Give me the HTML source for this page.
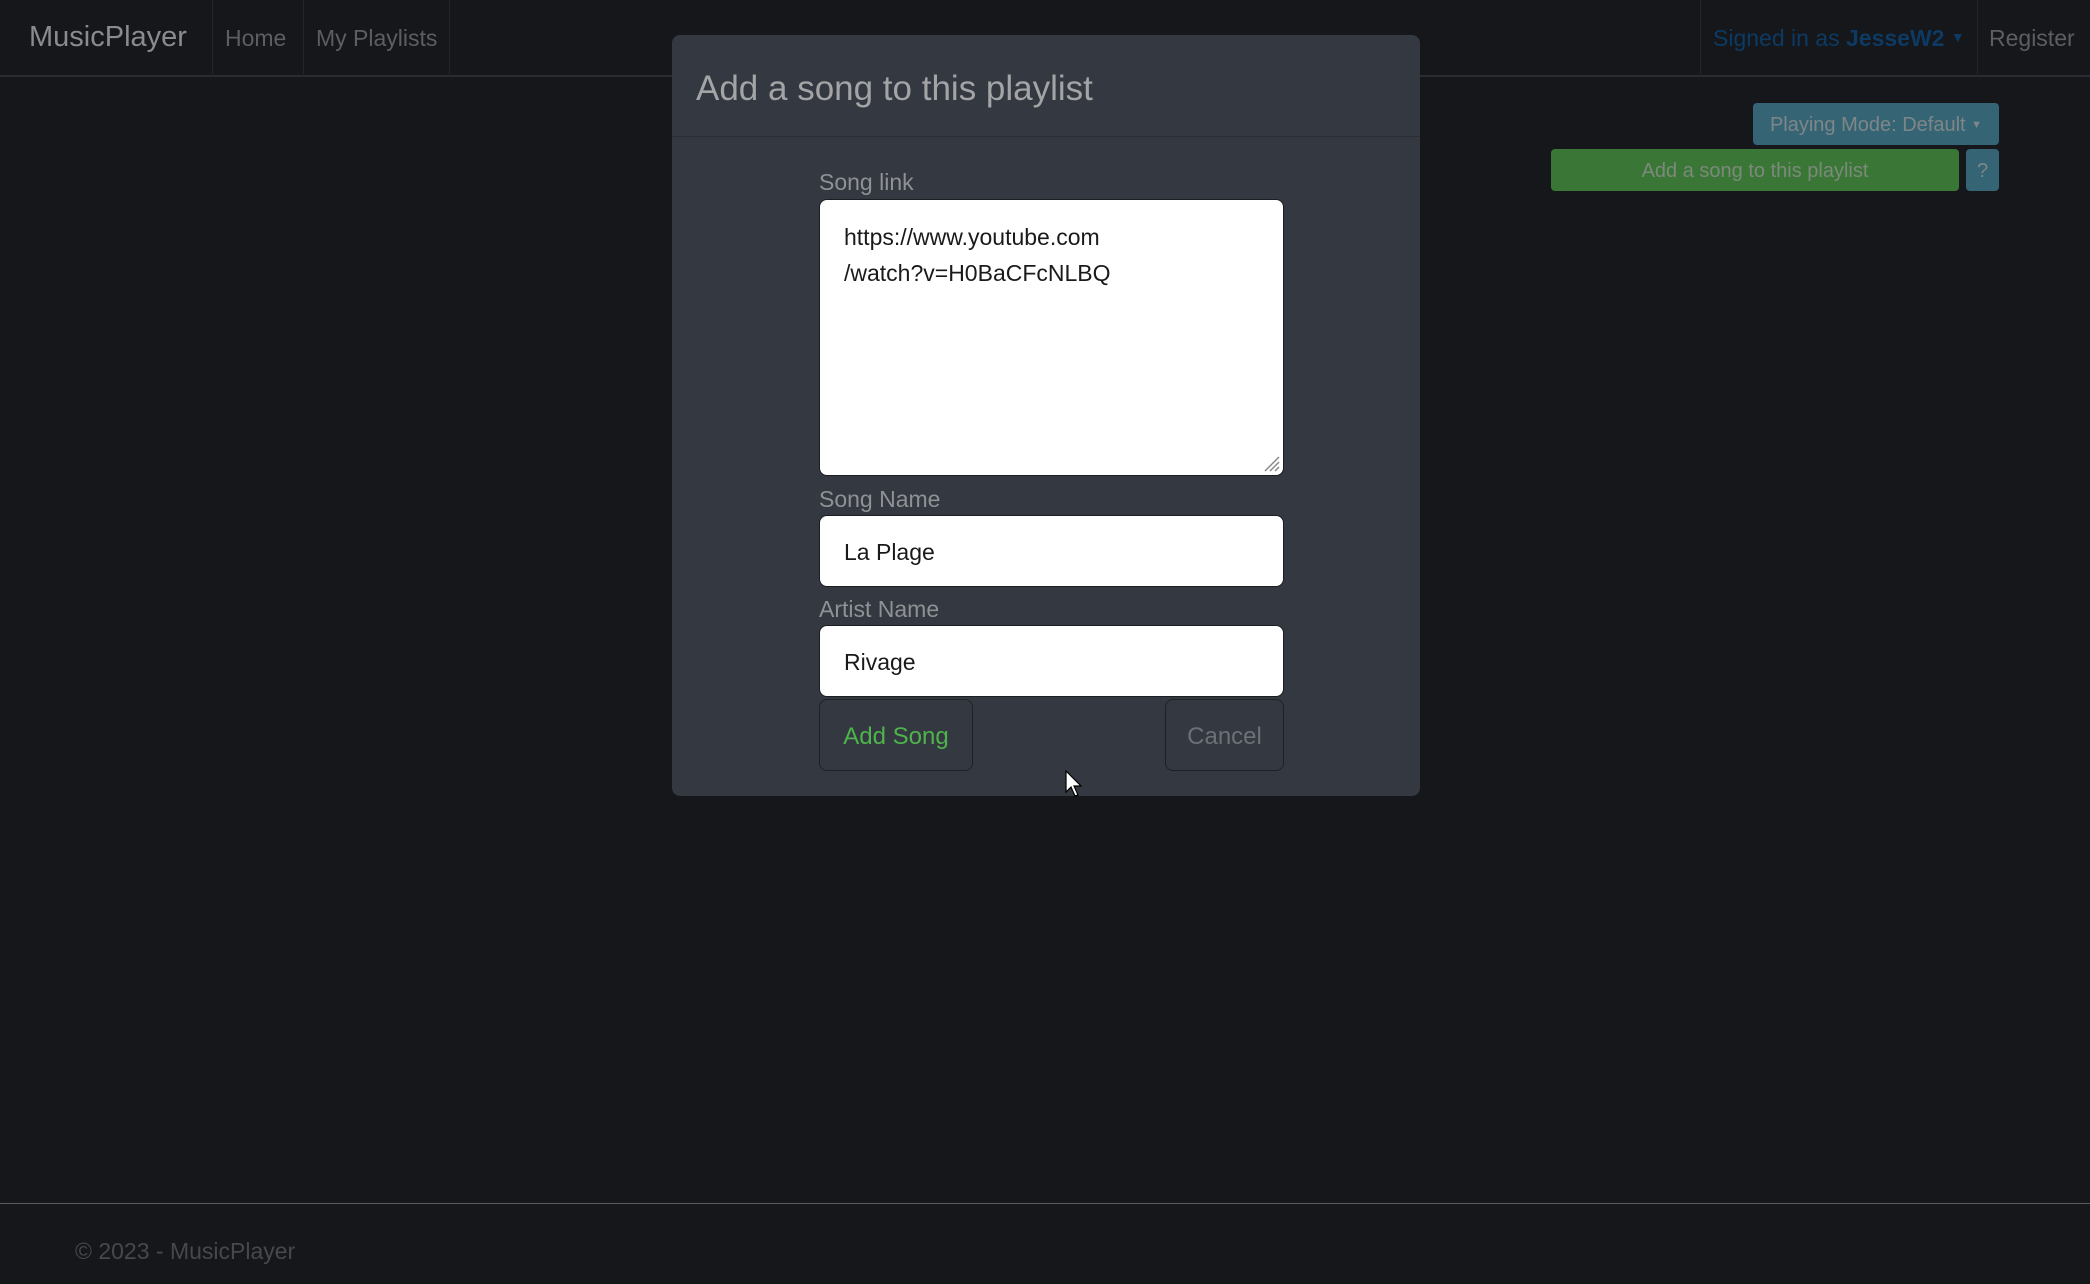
<!DOCTYPE html>
<html><head><meta charset="utf-8"><style>
*{box-sizing:border-box;margin:0;padding:0}
body{width:2090px;height:1284px;background:#15171b;font-family:"Liberation Sans",sans-serif;position:relative;overflow:hidden}
.a{position:absolute;white-space:nowrap}
.nav{position:absolute;left:0;top:0;width:2090px;height:77px;border-bottom:2px solid #2a2c31}
.sep{position:absolute;top:0;width:1px;height:77px;background:#22252a}
.modal{position:absolute;left:672px;top:35px;width:748px;height:761px;background:#343840;border-radius:8px}
.lbl{position:absolute;left:147px;color:#8f9295;font-size:23px}
.inp{position:absolute;left:147px;width:465px;background:#fff;border-radius:8px;border:1px solid #1b1d20;color:#1a1a1a;font-size:23px;padding-left:24px}
.btn{position:absolute;top:664px;height:72px;border:1px solid #1e2125;border-radius:8px;font-size:24px;text-align:center;line-height:74px}
</style></head><body>
<div class="nav">
<div class="a" style="left:29px;top:21px;font-size:29px;color:#8a8b8d">MusicPlayer</div>
<div class="sep" style="left:212px"></div>
<div class="a" style="left:225px;top:25px;font-size:23px;color:#5c5e61">Home</div>
<div class="sep" style="left:303px"></div>
<div class="a" style="left:316px;top:25px;font-size:23px;color:#5c5e61">My Playlists</div>
<div class="sep" style="left:449px"></div>
<div class="sep" style="left:1700px"></div>
<div class="a" style="left:1713px;top:25px;font-size:23px;color:#0d3a63">Signed in as <b>JesseW2</b> <span style="font-size:14px;position:relative;top:-4px">▼</span></div>
<div class="sep" style="left:1977px"></div>
<div class="a" style="left:1989px;top:25px;font-size:23px;color:#5c5e61">Register</div>
</div>
<div class="a" style="left:1753px;top:103px;width:246px;height:42px;background:#356574;border-radius:4px;color:#7e8688;font-size:20px;line-height:45px;text-align:center">Playing Mode: Default <span style="font-size:11px;position:relative;top:-3px">▼</span></div>
<div class="a" style="left:1551px;top:149px;width:408px;height:42px;background:#3a7636;border-radius:4px;color:#7b8a7a;font-size:20px;line-height:45px;text-align:center">Add a song to this playlist</div>
<div class="a" style="left:1966px;top:149px;width:33px;height:42px;background:#356574;border-radius:4px;color:#7e8688;font-size:20px;line-height:45px;text-align:center">?</div>
<div class="a" style="left:0;top:1203px;width:2090px;height:1px;background:#595a5c"></div>
<div class="a" style="left:75px;top:1238px;font-size:23px;color:#46484b">© 2023 - MusicPlayer</div>

<div class="modal">
<div class="a" style="left:24px;top:34px;font-size:35px;color:#a2a4a6">Add a song to this playlist</div>
<div class="a" style="left:0;top:101px;width:748px;height:1px;background:#2a2e34"></div>
<div class="lbl" style="top:134px">Song link</div>
<div class="inp" style="top:164px;height:277px;padding-top:19px;line-height:36px">https://www.youtube.com<br>/watch?v=H0BaCFcNLBQ
<svg style="position:absolute;right:2px;bottom:2px" width="20" height="20" viewBox="0 0 20 20"><path d="M18 4L4 18M18 9L9 18M18 14L14 18" stroke="#888" stroke-width="1.5"/></svg></div>
<div class="lbl" style="top:451px">Song Name</div>
<div class="inp" style="top:480px;height:72px;line-height:72px">La Plage</div>
<div class="lbl" style="top:561px">Artist Name</div>
<div class="inp" style="top:590px;height:72px;line-height:72px">Rivage</div>
<div class="btn" style="left:147px;width:154px;color:#4fb34d">Add Song</div>
<div class="btn" style="left:493px;width:119px;color:#6c7176">Cancel</div>
<svg style="position:absolute;left:393px;top:735px" width="22" height="30" viewBox="0 0 22 30"><path d="M1 1L1 22L6 17L10 26L13 25L9 16L16 16Z" fill="#fff" stroke="#000" stroke-width="1.2"/></svg>
</div>
</body></html>
